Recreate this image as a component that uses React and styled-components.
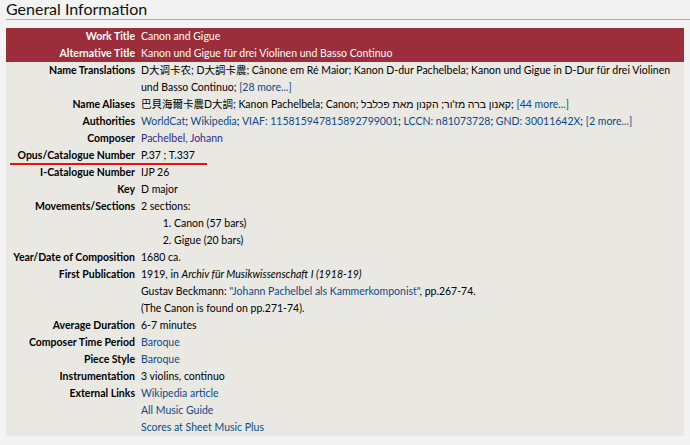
import React from "react";
import styled, { createGlobalStyle } from "styled-components";

// Styling
const GlobalStyle = createGlobalStyle`
  html, body {
    margin: 0;
    padding: 0;
    background: #f3f3f3;
  }
  body {
    font-family: Lato, "Noto Sans CJK SC", "Noto Sans", sans-serif;
    color: #000;
  }
`;

const Page = styled.div`
  padding: 0 0 10px 6px;
  width: 684px;
`;

const Heading = styled.h2`
  margin: 0 0 8px 0;
  font-size: 16px;
  font-weight: normal;
  line-height: 18px;
  padding-bottom: 1px;
  color: #111;
  border-bottom: 1px solid #aaa;
`;

const InfoTable = styled.div`
  display: grid;
  grid-template-columns: 135px 1fr;
  margin-right: 6px;
  background: #eae8e3;
  font-size: 10.5px;
  line-height: 17px;
`;

const Label = styled.div`
  position: relative;
  text-align: right;
  font-weight: bold;
  white-space: nowrap;
  padding-right: 6px;
  color: ${(p) => (p.$head ? "#fff" : "#000")};
  background: ${(p) => (p.$head ? "#9c2d3a" : "transparent")};
  ${(p) =>
    p.$marked &&
    `&::after {
      content: "";
      position: absolute;
      left: 4px;
      width: 197px;
      bottom: -1px;
      height: 2px;
      background: #e31414;
    }`}
`;

const Value = styled.div`
  padding-right: 6px;
  color: ${(p) => (p.$head ? "#fff" : "#000")};
  background: ${(p) => (p.$head ? "#9c2d3a" : "transparent")};
`;

const Link = styled.span`
  color: ${(p) => (p.$visited ? "#2a2a8e" : "#0b4a88")};
`;

const Sections = styled.ol`
  margin: 0;
  padding-left: 33px;
`;

function getRows() {
  return [
    { label: "Name Translations", value: (
      <>D大调卡农; D大調卡農; Cânone em Ré Maior; Kanon D-dur Pachelbela; Kanon und Gigue in D-Dur für drei Violinen und Basso Continuo; <Link>[28 more...]</Link></>
    ) },
    { label: "Name Aliases", value: (
      <>巴貝海爾卡農D大調; Kanon Pachelbela; Canon; <span dir="rtl">קאנון ברה מז'ור; הקנון מאת פכלבל</span>; <Link>[44 more...]</Link></>
    ) },
    { label: "Authorities", value: (
      <><Link>WorldCat</Link>; <Link>Wikipedia</Link>; <Link>VIAF: 115815947815892799001</Link>; <Link>LCCN: n81073728</Link>; <Link>GND: 30011642X</Link>; <Link>[2 more...]</Link></>
    ) },
    { label: "Composer", value: <Link $visited>Pachelbel, Johann</Link> },
    { label: "Opus/Catalogue Number", value: "P.37 ; T.337", marked: true },
    { label: "I-Catalogue Number", value: "IJP 26" },
    { label: "Key", value: "D major" },
    { label: "Movements/Sections", value: (
      <>2 sections:
        <Sections>
          <li>Canon (57 bars)</li>
          <li>Gigue (20 bars)</li>
        </Sections>
      </>
    ) },
    { label: "Year/Date of Composition", value: "1680 ca." },
    { label: "First Publication", value: (
      <>1919, in <i>Archiv für Musikwissenschaft I (1918-19)</i><br />
        Gustav Beckmann: <Link>"Johann Pachelbel als Kammerkomponist"</Link>, pp.267-74.<br />
        (The Canon is found on pp.271-74).</>
    ) },
    { label: "Average Duration", value: "6-7 minutes" },
    { label: "Composer Time Period", value: <Link>Baroque</Link> },
    { label: "Piece Style", value: <Link>Baroque</Link> },
    { label: "Instrumentation", value: "3 violins, continuo" },
    { label: "External Links", value: (
      <><Link>Wikipedia article</Link><br /><Link>All Music Guide</Link><br /><Link>Scores at Sheet Music Plus</Link></>
    ) },
  ];
}

export default function App() {
  const rows = getRows();
  return (
    <Page>
      <GlobalStyle />
      <Heading>General Information</Heading>
      <InfoTable>
        <Label $head>Work Title</Label>
        <Value $head>Canon and Gigue</Value>
        <Label $head>Alternative Title</Label>
        <Value $head>Kanon und Gigue für drei Violinen und Basso Continuo</Value>
        {rows.map((row) => (
          <React.Fragment key={row.label}>
            <Label $marked={row.marked}>{row.label}</Label>
            <Value>{row.value}</Value>
          </React.Fragment>
        ))}
      </InfoTable>
    </Page>
  );
}
